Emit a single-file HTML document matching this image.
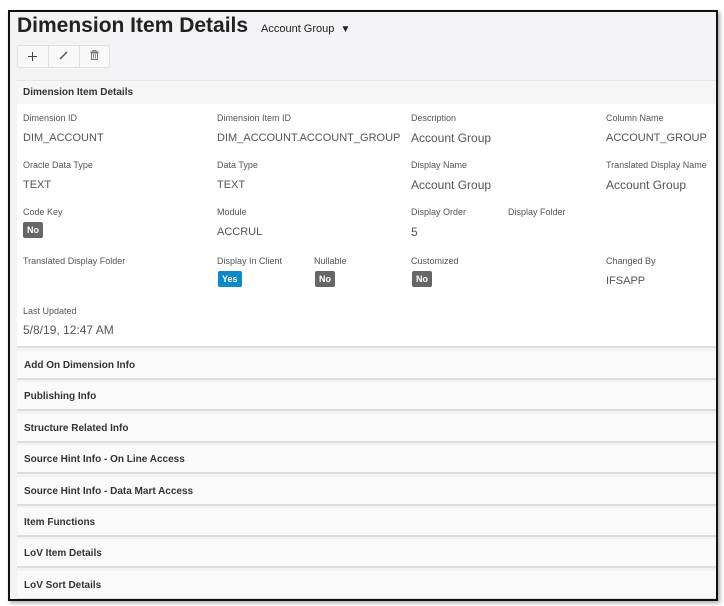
<!DOCTYPE html>
<html><head><style>
*{margin:0;padding:0;box-sizing:border-box}
body{width:724px;height:606px;background:#fff;position:relative;overflow:hidden;font-family:"Liberation Sans",sans-serif;color:#333}
#frame{position:absolute;left:8px;top:10px;width:710px;height:591px;border:2px solid #111;background:#f3f2f4;overflow:hidden;box-shadow:2px 2px 4px #aaa}
.a{position:absolute;white-space:nowrap}
.l{font-size:9px;color:#555}
.v{font-size:12px;color:#555}
.u{font-size:11px}
.b{font-size:9px;font-weight:bold;color:#fff;border-radius:2px;padding:3px 4px;line-height:10px}
.sec{position:absolute;left:7px;width:710px;height:29px;background:#fafafa;border-bottom:2px solid #ddd;font-size:10px;font-weight:bold;color:#333;padding:9px 0 0 7px}
</style></head><body>
<div id="frame">
<div class="a" style="left:7px;top:2px;font-size:21px;font-weight:bold;color:#222">Dimension Item Details</div>
<div class="a" style="left:251px;top:11px;font-size:11px;color:#222">Account Group &nbsp;<span style="font-size:10px">▼</span></div>
<div class="a" style="left:7px;top:33px;width:93px;height:23px;background:#f8f8f8;border:1px solid #e0e0e0;border-radius:3px"></div>
<div class="a" style="left:38px;top:33px;width:1px;height:23px;background:#e0e0e0"></div>
<div class="a" style="left:69px;top:33px;width:1px;height:23px;background:#e0e0e0"></div>
<svg class="a" style="left:18px;top:40px" width="9" height="9"><path d="M4.5 0V9M0 4.5H9" stroke="#444" stroke-width="1"/></svg>
<svg class="a" style="left:49px;top:39px" width="9" height="9"><path d="M1 8L8 1" stroke="#555" stroke-width="1.5"/></svg>
<svg class="a" style="left:80px;top:38px" width="9" height="10"><path d="M0 2H9M3 2V0.5H6V2M1.5 3H7.5V9.5H1.5Z" stroke="#777" stroke-width="1" fill="none"/><path d="M3.5 4V8.5M5.5 4V8.5" stroke="#777" stroke-width="0.8"/></svg>
<div class="a" style="left:7px;top:68px;width:710px;height:268px;background:#fff;border-bottom:2px solid #ddd"></div>
<div class="a" style="left:7px;top:68px;width:710px;height:24px;background:#f6f6f6;border-top:1px solid #e6e6e6"></div>
<div class="a" style="left:13px;top:75px;font-size:10px;font-weight:bold;color:#333">Dimension Item Details</div>
<div class="a l" style="left:13px;top:101px">Dimension ID</div>
<div class="a v u" style="left:13px;top:120px">DIM_ACCOUNT</div>
<div class="a l" style="left:207px;top:101px">Dimension Item ID</div>
<div class="a v u" style="left:207px;top:120px">DIM_ACCOUNT.ACCOUNT_GROUP</div>
<div class="a l" style="left:401px;top:101px">Description</div>
<div class="a v" style="left:401px;top:119px">Account Group</div>
<div class="a l" style="left:596px;top:101px">Column Name</div>
<div class="a v u" style="left:596px;top:120px">ACCOUNT_GROUP</div>
<div class="a l" style="left:13px;top:148px">Oracle Data Type</div>
<div class="a v u" style="left:13px;top:167px">TEXT</div>
<div class="a l" style="left:207px;top:148px">Data Type</div>
<div class="a v u" style="left:207px;top:167px">TEXT</div>
<div class="a l" style="left:401px;top:148px">Display Name</div>
<div class="a v" style="left:401px;top:166px">Account Group</div>
<div class="a l" style="left:596px;top:148px">Translated Display Name</div>
<div class="a v" style="left:596px;top:166px">Account Group</div>
<div class="a l" style="left:13px;top:195px">Code Key</div>
<div class="a b" style="left:13px;top:210px;background:#666">No</div>
<div class="a l" style="left:207px;top:195px">Module</div>
<div class="a v u" style="left:207px;top:214px">ACCRUL</div>
<div class="a l" style="left:401px;top:195px">Display Order</div>
<div class="a v" style="left:401px;top:213px">5</div>
<div class="a l" style="left:498px;top:195px">Display Folder</div>
<div class="a l" style="left:13px;top:244px">Translated Display Folder</div>
<div class="a l" style="left:207px;top:244px">Display In Client</div>
<div class="a b" style="left:208px;top:259px;background:#0a8bc7">Yes</div>
<div class="a l" style="left:304px;top:244px">Nullable</div>
<div class="a b" style="left:305px;top:259px;background:#666">No</div>
<div class="a l" style="left:401px;top:244px">Customized</div>
<div class="a b" style="left:402px;top:259px;background:#666">No</div>
<div class="a l" style="left:596px;top:244px">Changed By</div>
<div class="a v u" style="left:596px;top:263px">IFSAPP</div>
<div class="a l" style="left:13px;top:294px">Last Updated</div>
<div class="a v" style="left:13px;top:311px">5/8/19, 12:47 AM</div>
<div class="sec" style="top:339px">Add On Dimension Info</div>
<div class="sec" style="top:370px">Publishing Info</div>
<div class="sec" style="top:402px">Structure Related Info</div>
<div class="sec" style="top:433px">Source Hint Info - On Line Access</div>
<div class="sec" style="top:465px">Source Hint Info - Data Mart Access</div>
<div class="sec" style="top:496px">Item Functions</div>
<div class="sec" style="top:527px">LoV Item Details</div>
<div class="sec" style="top:559px">LoV Sort Details</div>
</div>
</body></html>
